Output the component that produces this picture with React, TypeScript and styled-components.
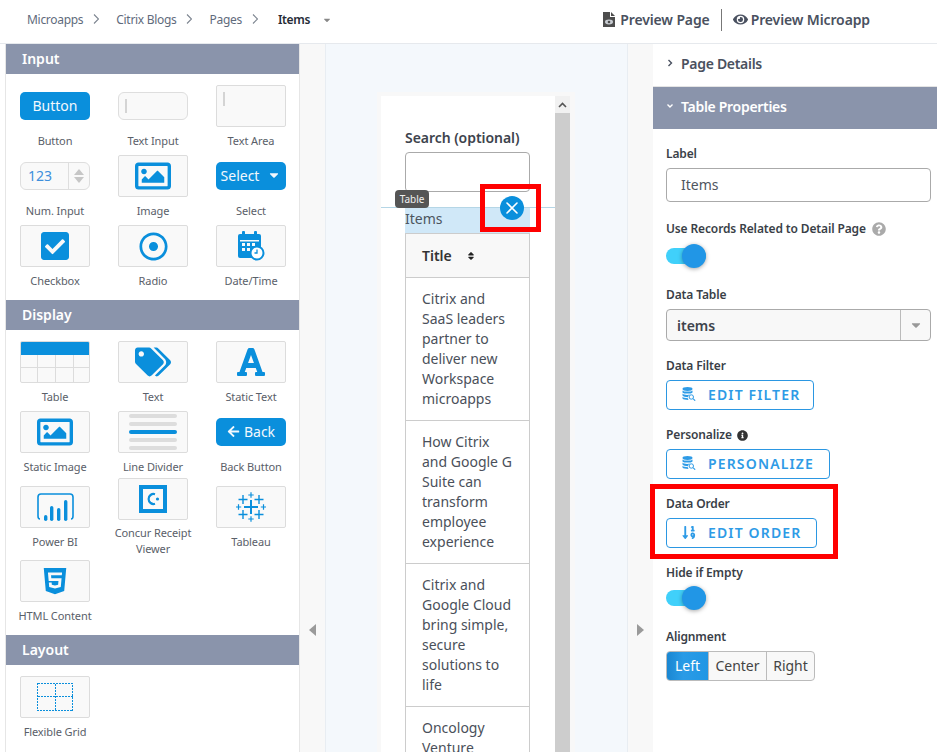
import type { ReactNode } from 'react';
import styled, { createGlobalStyle } from 'styled-components';
import {
  FaArrowLeft,
  FaCaretDown,
  FaCheckSquare,
  FaEye,
  FaFont,
  FaHtml5,
  FaInfoCircle,
  FaQuestionCircle,
  FaRegDotCircle,
  FaRegImage,
  FaSort,
  FaSortNumericDown,
  FaTags,
} from 'react-icons/fa';

const BLUE = '#0a8fdc';
const SLATE = '#8a94ab';

const GlobalStyle = createGlobalStyle`
  html, body {
    margin: 0;
    padding: 0;
    background: #fff;
  }
  * {
    box-sizing: border-box;
  }
  body {
    font-family: "Noto Sans", "Open Sans", sans-serif;
    color: #444b57;
    overflow: hidden;
  }
`;

const Page = styled.div`
  display: flex;
  flex-direction: column;
  height: 752px;
  overflow: hidden;
`;

const TopBar = styled.header`
  display: flex;
  align-items: center;
  justify-content: space-between;
  flex: none;
  height: 44px;
  padding: 0 67px 4px 27px;
  border-bottom: 1px solid #e6e9ed;
`;

const Breadcrumbs = styled.nav`
  display: flex;
  align-items: center;
  font-size: 12px;
  letter-spacing: -0.3px;
  color: #5f6b7c;
`;

const CrumbChevron = styled.svg`
  width: 6px;
  height: 10px;
  margin: -2px 17px 0 10px;
  fill: none;
  stroke: #7d8590;
  stroke-width: 1.1;
`;

const CurrentCrumb = styled.span`
  margin-left: 3px;
  font-weight: 600;
  color: #252b36;
`;

const CrumbCaret = styled(FaCaretDown)`
  margin-left: 12px;
  width: 10px;
  height: 10px;
  color: #888;
`;

const PreviewActions = styled.div`
  display: flex;
  align-items: center;
  font-size: 14px;
  font-weight: 600;
  letter-spacing: -0.12px;
  color: #4a5160;
`;

const PreviewAction = styled.span`
  display: flex;
  align-items: center;
  gap: 3px;
`;

const PreviewDivider = styled.span`
  width: 1px;
  height: 22px;
  margin: 0 11px;
  background: #777;
`;

const Workspace = styled.main`
  display: flex;
  flex: 1;
  min-height: 0;
  padding-left: 5px;
`;

const Palette = styled.aside`
  flex: none;
  width: 295px;
  border-left: 1px solid #e6e6e6;
  border-right: 1px solid #e6e6e6;
  background: #fff;
`;

const PaletteHeading = styled.h3`
  height: 30px;
  margin: 0;
  padding-left: 16px;
  background: ${SLATE};
  color: #fff;
  font-size: 14px;
  font-weight: 600;
  line-height: 30px;
`;

const PaletteGrid = styled.div<{ $rows?: string }>`
  display: grid;
  grid-template-columns: repeat(3, 98px);
  grid-auto-rows: 70px;
  ${({ $rows }) => ($rows ? `grid-template-rows: ${$rows};` : '')}
  padding: 11px 0 5px;
`;

const PaletteItem = styled.div`
  display: flex;
  flex-direction: column;
  align-items: center;
  align-self: center;
`;

const WidgetSlot = styled.div`
  display: flex;
  align-items: center;
  justify-content: center;
  width: 70px;
  height: 42px;
`;

const WidgetLabel = styled.div<{ $tall?: boolean }>`
  display: flex;
  align-items: center;
  justify-content: center;
  width: 94px;
  height: ${({ $tall }) => ($tall ? 42 : 28)}px;
  margin-bottom: ${({ $tall }) => ($tall ? 1 : 0)}px;
  font-size: 11px;
  letter-spacing: -0.1px;
  line-height: 16px;
  text-align: center;
  color: #5a6069;
`;

const Tile = styled.div`
  display: flex;
  align-items: center;
  justify-content: center;
  width: 70px;
  height: 42px;
  border: 1px solid #dcdcdc;
  border-radius: 2px;
  background: #f9f9f9;
  color: ${BLUE};
  overflow: hidden;
`;

const SolidButton = styled.div<{ $gap?: number }>`
  display: flex;
  align-items: center;
  justify-content: center;
  gap: ${({ $gap }) => $gap ?? 0}px;
  width: 70px;
  height: 28px;
  padding-bottom: 2px;
  border-radius: 5px;
  background: ${BLUE};
  color: #f2f8fd;
  font-size: 14px;
`;

const MockField = styled.div`
  display: flex;
  align-items: center;
  width: 70px;
  height: 28px;
  padding-left: 6px;
  border: 1px solid #dedede;
  border-radius: 6px;
  background: #f9f9f9;
`;

const MockCursor = styled.span`
  width: 2px;
  height: 14px;
  background: #d4d4d4;
`;

const AreaTile = styled(Tile)`
  align-items: flex-start;
  justify-content: flex-start;
  padding: 6px 0 0 6px;
`;

const NumberField = styled(MockField)`
  justify-content: space-between;
  padding: 0;
  color: #3e8fdc;
  font-size: 14px;
`;

const NumberValue = styled.span`
  padding: 0 0 2px 7px;
`;

const NumberSpinner = styled.span`
  display: flex;
  flex-direction: column;
  align-items: center;
  justify-content: center;
  gap: 2px;
  width: 21px;
  height: 100%;
  border-left: 1px solid #dedede;
`;

const SpinArrow = styled.span<{ $up?: boolean }>`
  width: 0;
  height: 0;
  border-left: 5px solid transparent;
  border-right: 5px solid transparent;
  ${({ $up }) => ($up ? 'border-bottom' : 'border-top')}: 6px solid #c6c6c6;
`;

const DividerStack = styled.div`
  display: flex;
  flex-direction: column;
  gap: 4px;
  width: 48px;
`;

const DividerBar = styled.span<{ $active?: boolean }>`
  height: 4px;
  border-radius: 2px;
  background: ${({ $active }) => ($active ? BLUE : '#dddddd')};
`;

const Gutter = styled.div`
  display: flex;
  align-items: flex-start;
  justify-content: center;
  flex: none;
  width: 25px;
  padding-top: 580px;
  background: #f8f8f8;
`;

const GutterArrow = styled.span<{ $right?: boolean }>`
  width: 0;
  height: 0;
  border-top: 6px solid transparent;
  border-bottom: 6px solid transparent;
  ${({ $right }) => ($right ? 'border-left' : 'border-right')}: 7px solid #9a9a9a;
`;

const Canvas = styled.section`
  display: flex;
  justify-content: center;
  flex: none;
  width: 303px;
  padding: 48px 1px 0 0;
  border-left: 1px solid #e8edf2;
  border-right: 1px solid #e8edf2;
  background: #f4f8fc;
`;

const PhoneFrame = styled.div`
  display: flex;
  width: 198px;
  height: 660px;
  padding: 4px 5px 0 4px;
  background: #f8f8f8;
`;

const PhoneBody = styled.div`
  flex: 1;
  min-width: 0;
  background: #fff;
`;

const FakeScrollbar = styled.div`
  display: flex;
  flex-direction: column;
  flex: none;
  width: 15px;
  background: #cdcdcd;
`;

const ScrollUp = styled.div`
  display: flex;
  align-items: center;
  justify-content: center;
  height: 17px;
  background: #f1f1f1;
`;

const SearchBlock = styled.div`
  padding: 32px 25px 0 24px;
`;

const SearchLabel = styled.div`
  margin-bottom: 4px;
  font-size: 14px;
  font-weight: 600;
  letter-spacing: -0.05px;
  line-height: 20px;
  color: #3d434d;
`;

const SearchInput = styled.div`
  height: 40px;
  border: 1px solid #aaa;
  border-radius: 4px;
  background: #fff;
`;

const SelectedWidget = styled.div`
  position: relative;
  margin-top: 15px;
  padding: 0 25px 0 24px;
  border-top: 1px solid #b5d6e6;
`;

const WidgetTag = styled.span`
  position: absolute;
  top: -18px;
  left: 14px;
  width: 34px;
  height: 18px;
  border-radius: 4px;
  background: #555;
  color: #f0f0f0;
  font-size: 10px;
  line-height: 18px;
  text-align: center;
`;

const RemoveBadge = styled.span`
  position: absolute;
  top: -12px;
  left: 119px;
  display: flex;
  align-items: center;
  justify-content: center;
  width: 24px;
  height: 24px;
  border-radius: 50%;
  background: ${BLUE};
`;

const Callout = styled.span`
  position: absolute;
  border: 5px solid #f00;
  pointer-events: none;
`;

const RemoveCallout = styled(Callout)`
  top: -24px;
  left: 99px;
  width: 61px;
  height: 48px;
`;

const OrderCallout = styled(Callout)`
  top: -12px;
  left: -16px;
  width: 188px;
  height: 75px;
`;

const WidgetTitle = styled.div`
  height: 25px;
  background: #d0e8f8;
  color: #4c5560;
  font-size: 14px;
  line-height: 21px;
`;

const ResultTable = styled.div`
  border: 1px solid #ccc;
  border-bottom: 0;
`;

const TableHead = styled.div`
  display: flex;
  align-items: center;
  gap: 14px;
  height: 44px;
  padding-left: 16px;
  border-bottom: 1px solid #ccc;
  background: #f8f8f8;
  color: #333;
  font-size: 14px;
  font-weight: 600;
`;

const SortGlyph = styled(FaSort)`
  width: 10px;
  height: 10px;
  color: #222;
`;

const TableRow = styled.div`
  padding: 11px 16px 11px 16px;
  border-bottom: 1px solid #ccc;
  color: #4a505a;
  font-size: 14px;
  line-height: 20px;
`;

const Inspector = styled.aside`
  flex: 1;
  min-width: 0;
  background: #fff;
`;

const AccordionRow = styled.div<{ $open?: boolean }>`
  display: flex;
  align-items: center;
  gap: 8px;
  height: ${({ $open }) => ($open ? 42 : 43)}px;
  padding: 0 0 4px 14px;
  border-bottom: ${({ $open }) => ($open ? '0' : '1px solid #e4e4e4')};
  background: ${({ $open }) => ($open ? SLATE : '#fff')};
  color: ${({ $open }) => ($open ? '#fff' : '#4a5160')};
  font-size: 14px;
  font-weight: 600;
  letter-spacing: -0.3px;
`;

const AccordionIcon = styled.svg`
  width: 6px;
  height: 8px;
  fill: none;
  stroke: currentColor;
  stroke-width: 1.4;
`;

const InspectorForm = styled.div`
  padding: 17px 6px 0 13px;
`;

const Field = styled.div<{ $after: number }>`
  position: relative;
  margin-bottom: ${({ $after }) => $after}px;
`;

const FieldLabel = styled.div<{ $gap?: number }>`
  display: flex;
  align-items: center;
  gap: 5px;
  margin-bottom: ${({ $gap }) => $gap ?? 6}px;
  color: #3a3f48;
  font-size: 12px;
  font-weight: 600;
  letter-spacing: -0.13px;
  line-height: 16px;
`;

const HelpIcon = styled(FaQuestionCircle)`
  width: 14px;
  height: 14px;
  margin-left: 1px;
  color: #aaa;
`;

const InfoIcon = styled(FaInfoCircle)`
  width: 11px;
  height: 11px;
  color: #333;
`;

const TextBox = styled.div`
  display: flex;
  align-items: center;
  height: 34px;
  padding: 0 0 2px 14px;
  border: 1px solid #aaa;
  border-radius: 4px;
  color: #50565f;
  font-size: 14px;
`;

const ToggleWrap = styled.div`
  display: flex;
  align-items: center;
  height: 24px;
`;

const ToggleTrack = styled.div`
  display: flex;
  align-items: center;
  justify-content: flex-end;
  width: 40px;
  height: 16px;
  border-radius: 8px;
  background: #40d0fa;
`;

const ToggleKnob = styled.span`
  flex: none;
  width: 24px;
  height: 24px;
  border-radius: 50%;
  background: #2196e6;
  box-shadow: 0 1px 4px rgba(0, 0, 0, 0.35);
`;

const SelectBox = styled.div`
  display: flex;
  align-items: center;
  height: 32px;
  padding-left: 10px;
  border: 1px solid #aaa;
  border-radius: 4px;
  background: #f8f8f8;
  color: #3f444d;
  font-size: 14px;
  font-weight: 600;
`;

const SelectValue = styled.span`
  flex: 1;
`;

const SelectToggle = styled.span`
  display: flex;
  align-items: center;
  justify-content: center;
  width: 30px;
  height: 100%;
  border-left: 1px solid #bbb;
  color: #999;
`;

const OutlineButton = styled.div<{ $width: number }>`
  display: flex;
  align-items: center;
  gap: 12px;
  width: ${({ $width }) => $width}px;
  height: 30px;
  padding: 0 0 2px 15px;
  border: 1px solid #2b97e2;
  border-radius: 4px;
  color: #2e9be6;
  font-size: 14px;
  font-weight: 600;
  letter-spacing: 1.15px;
  white-space: nowrap;
`;

const OutlineIcon = styled.span`
  display: flex;
  align-items: center;
  justify-content: center;
  width: 14px;
`;

const Segments = styled.div`
  display: inline-flex;
  height: 30px;
  border: 1px solid #bbb;
  border-radius: 4px;
  background: #f8f8f8;
  overflow: hidden;
`;

const Segment = styled.span<{ $active?: boolean; $width: number }>`
  width: ${({ $width }) => $width}px;
  border-left: ${({ $active }) => ($active ? '0' : '1px solid #bbb')};
  background: ${({ $active }) =>
    $active ? 'linear-gradient(90deg, #1a87d2, #2a9be6 40%, #2096e4)' : 'transparent'};
  color: ${({ $active }) => ($active ? '#fff' : '#444')};
  font-size: 14px;
  line-height: 28px;
  text-align: center;
`;

const CalendarIcon = () => (
  <svg width="28" height="30" viewBox="0 0 28 30">
    <rect x="1" y="3" width="23" height="24" rx="2" fill={BLUE} />
    <rect x="5" y="0" width="3" height="6" rx="1" fill={BLUE} />
    <rect x="17" y="0" width="3" height="6" rx="1" fill={BLUE} />
    <rect x="3" y="9" width="19" height="1.5" fill="#f9f9f9" />
    {[5, 10, 15].map((x) =>
      [12, 17].map((y) => <rect key={`${x}-${y}`} x={x} y={y} width="3" height="3" fill="#f9f9f9" />)
    )}
    <circle cx="20" cy="22" r="6.5" fill="#fff" stroke={BLUE} strokeWidth="2" />
    <path d="M20 18.5V22H17.5" fill="none" stroke={BLUE} strokeWidth="1.3" />
  </svg>
);

const TableIcon = () => (
  <svg width="68" height="40" viewBox="0 0 68 40">
    <rect width="68" height="13" fill={BLUE} />
    <path d="M0 25.5H68M16.5 13V40M34.5 13V40M52.5 13V40" stroke="#dcdcdc" strokeWidth="1" fill="none" />
  </svg>
);

const PowerBiIcon = () => (
  <svg width="37" height="28" viewBox="0 0 37 28">
    <path
      d="M3 26Q1 26 1 23V4Q1 1 4 1H33Q36 1 36 4V23Q36 26 34 26"
      fill="none"
      stroke={BLUE}
      strokeWidth="1.6"
    />
    <rect x="7" y="22" width="3.4" height="6" rx="1.7" fill={BLUE} />
    <rect x="13" y="13" width="3.4" height="15" rx="1.7" fill={BLUE} />
    <rect x="20" y="15" width="3.4" height="13" rx="1.7" fill={BLUE} />
    <rect x="27" y="7" width="3.4" height="21" rx="1.7" fill={BLUE} />
  </svg>
);

const ConcurIcon = () => (
  <svg width="28" height="28" viewBox="0 0 28 28">
    <rect width="28" height="28" fill={BLUE} />
    <rect x="4" y="4" width="20" height="20" fill="#f9f9f9" />
    <path d="M16 9.2A5 5 0 1 0 16 18.8" fill="none" stroke={BLUE} strokeWidth="2.2" />
    <circle cx="18.5" cy="14" r="1.6" fill={BLUE} />
  </svg>
);

const TABLEAU_MARKS = [
  [0, 0, 7, 2],
  [-8, -7.5, 4.5, 1.4],
  [8, -7.5, 4.5, 1.4],
  [-8, 7.5, 4.5, 1.4],
  [8, 7.5, 4.5, 1.4],
  [0, -12, 2.7, 1.2],
  [0, 12, 2.7, 1.2],
  [-12.5, 0, 2.7, 1.2],
  [12.5, 0, 2.7, 1.2],
];

const TableauIcon = () => (
  <svg width="30" height="30" viewBox="-15 -15 30 30">
    {TABLEAU_MARKS.map(([x, y, r, w]) => (
      <path
        key={`${x},${y}`}
        d={`M${x - r} ${y}H${x + r}M${x} ${y - r}V${y + r}`}
        stroke={BLUE}
        strokeWidth={w}
        fill="none"
      />
    ))}
  </svg>
);

const FlexGridIcon = () => (
  <svg width="38" height="30" viewBox="0 0 38 30" shapeRendering="crispEdges">
    <path
      d="M1.5 1.5H36.5V28.5H1.5ZM1.5 14.5H36.5M19.5 1.5V28.5"
      fill="none"
      stroke={BLUE}
      strokeWidth="1"
      strokeDasharray="2 1"
    />
  </svg>
);

const DataSearchIcon = () => (
  <svg width="14" height="14" viewBox="0 0 14 14">
    <ellipse cx="5.5" cy="2" rx="5" ry="1.9" fill="#2e9be6" />
    <path
      d="M.5 3.4C1.5 5 9.5 5 10.5 3.4V5.4C9.5 7 1.5 7 .5 5.4ZM.5 6.6C1.5 8.2 6 8.4 8 7.6 6.6 8.4 6 9.4 6 10.2 3.5 10.2 1.2 9.6.5 8.6ZM.5 9.8C1.2 10.8 3.5 11.2 6 11.2L6.4 13C3.5 13 1.2 12.6.5 11.6Z"
      fill="#2e9be6"
    />
    <circle cx="9.3" cy="10" r="2.2" fill="none" stroke="#2e9be6" strokeWidth="1" />
    <path d="M11 11.7L13.2 13.7" stroke="#2e9be6" strokeWidth="1.1" />
  </svg>
);

const PagePreviewIcon = () => (
  <svg width="14" height="15" viewBox="0 0 14 15">
    <path d="M0 0H7V5H12V15H0Z" fill="#4d4d4d" />
    <path d="M8 0L12 4H8Z" fill="#4d4d4d" />
    <ellipse cx="6" cy="10" rx="4" ry="2.4" fill="#c8ccd2" />
    <circle cx="6" cy="10" r="1.3" fill="#4d4d4d" />
  </svg>
);

const CloseIcon = () => (
  <svg width="12" height="12" viewBox="0 0 12 12">
    <path d="M1 1L11 11M11 1L1 11" stroke="#fff" strokeWidth="1.6" strokeLinecap="round" />
  </svg>
);

const Chevron = () => (
  <CrumbChevron viewBox="0 0 6 10">
    <path d="M1 .5L5.5 5L1 9.5" />
  </CrumbChevron>
);

type Widget = { label: string; preview: ReactNode; tall?: boolean };

const inputWidgets: Widget[] = [
  { label: 'Button', preview: <SolidButton>Button</SolidButton> },
  { label: 'Text Input', preview: <MockField><MockCursor /></MockField> },
  { label: 'Text Area', preview: <AreaTile><MockCursor /></AreaTile> },
  {
    label: 'Num. Input',
    preview: (
      <NumberField>
        <NumberValue>123</NumberValue>
        <NumberSpinner>
          <SpinArrow $up />
          <SpinArrow />
        </NumberSpinner>
      </NumberField>
    ),
  },
  { label: 'Image', preview: <Tile><FaRegImage size={36} /></Tile> },
  { label: 'Select', preview: <SolidButton $gap={8}>Select <FaCaretDown size={14} /></SolidButton> },
  { label: 'Checkbox', preview: <Tile><FaCheckSquare size={32} /></Tile> },
  { label: 'Radio', preview: <Tile><FaRegDotCircle size={29} /></Tile> },
  { label: 'Date/Time', preview: <Tile><CalendarIcon /></Tile> },
];

const displayWidgets: Widget[] = [
  { label: 'Table', preview: <Tile><TableIcon /></Tile> },
  { label: 'Text', preview: <Tile><FaTags size={36} /></Tile> },
  { label: 'Static Text', preview: <Tile><FaFont size={32} /></Tile> },
  { label: 'Static Image', preview: <Tile><FaRegImage size={36} /></Tile> },
  {
    label: 'Line Divider',
    preview: (
      <Tile>
        <DividerStack>
          <DividerBar />
          <DividerBar />
          <DividerBar $active />
          <DividerBar />
          <DividerBar />
        </DividerStack>
      </Tile>
    ),
  },
  { label: 'Back Button', preview: <SolidButton $gap={4}><FaArrowLeft size={13} />Back</SolidButton> },
  { label: 'Power BI', preview: <Tile><PowerBiIcon /></Tile> },
  { label: 'Concur Receipt Viewer', preview: <Tile><ConcurIcon /></Tile>, tall: true },
  { label: 'Tableau', preview: <Tile><TableauIcon /></Tile> },
  { label: 'HTML Content', preview: <Tile><FaHtml5 size={30} /></Tile> },
];

const layoutWidgets: Widget[] = [
  { label: 'Flexible Grid', preview: <Tile><FlexGridIcon /></Tile> },
];

const paletteSections = [
  { title: 'Input', widgets: inputWidgets },
  { title: 'Display', widgets: displayWidgets, rows: '70px 70px 79px 70px' },
  { title: 'Layout', widgets: layoutWidgets },
];

const blogTitles = [
  'Citrix and SaaS leaders partner to deliver new Workspace microapps',
  'How Citrix and Google G Suite can transform employee experience',
  'Citrix and Google Cloud bring simple, secure solutions to life',
  'Oncology Venture',
];

export default function App() {
  return (
    <Page>
      <GlobalStyle />
      <TopBar>
        <Breadcrumbs>
          <span>Microapps</span>
          <Chevron />
          <span>Citrix Blogs</span>
          <Chevron />
          <span>Pages</span>
          <Chevron />
          <CurrentCrumb>Items</CurrentCrumb>
          <CrumbCaret />
        </Breadcrumbs>
        <PreviewActions>
          <PreviewAction>
            <PagePreviewIcon />
            Preview Page
          </PreviewAction>
          <PreviewDivider />
          <PreviewAction>
            <FaEye size={15} />
            Preview Microapp
          </PreviewAction>
        </PreviewActions>
      </TopBar>

      <Workspace>
        <Palette>
          {paletteSections.map((section) => (
            <section key={section.title}>
              <PaletteHeading>{section.title}</PaletteHeading>
              <PaletteGrid $rows={section.rows}>
                {section.widgets.map((widget) => (
                  <PaletteItem key={widget.label}>
                    <WidgetSlot>{widget.preview}</WidgetSlot>
                    <WidgetLabel $tall={widget.tall}>{widget.label}</WidgetLabel>
                  </PaletteItem>
                ))}
              </PaletteGrid>
            </section>
          ))}
        </Palette>

        <Gutter>
          <GutterArrow />
        </Gutter>

        <Canvas>
          <PhoneFrame>
            <PhoneBody>
              <SearchBlock>
                <SearchLabel>Search (optional)</SearchLabel>
                <SearchInput />
              </SearchBlock>
              <SelectedWidget>
                <WidgetTitle>Items</WidgetTitle>
                <ResultTable>
                  <TableHead>
                    Title
                    <SortGlyph />
                  </TableHead>
                  {blogTitles.map((title) => (
                    <TableRow key={title}>{title}</TableRow>
                  ))}
                </ResultTable>
                <WidgetTag>Table</WidgetTag>
                <RemoveBadge>
                  <CloseIcon />
                </RemoveBadge>
                <RemoveCallout />
              </SelectedWidget>
            </PhoneBody>
            <FakeScrollbar>
              <ScrollUp>
                <svg width="9" height="6" viewBox="0 0 9 6">
                  <path d="M1 5L4.5 1.5L8 5" fill="none" stroke="#555" strokeWidth="1.6" />
                </svg>
              </ScrollUp>
            </FakeScrollbar>
          </PhoneFrame>
        </Canvas>

        <Gutter>
          <GutterArrow $right />
        </Gutter>

        <Inspector>
          <AccordionRow>
            <AccordionIcon viewBox="0 0 6 8">
              <path d="M1.5 1L4.5 4L1.5 7" />
            </AccordionIcon>
            Page Details
          </AccordionRow>
          <AccordionRow $open>
            <AccordionIcon viewBox="0 0 6 8">
              <path d="M.5 2.5L3 5L5.5 2.5" />
            </AccordionIcon>
            Table Properties
          </AccordionRow>
          <InspectorForm>
            <Field $after={19}>
              <FieldLabel>Label</FieldLabel>
              <TextBox>Items</TextBox>
            </Field>
            <Field $after={19}>
              <FieldLabel $gap={7}>
                Use Records Related to Detail Page
                <HelpIcon />
              </FieldLabel>
              <ToggleWrap>
                <ToggleTrack>
                  <ToggleKnob />
                </ToggleTrack>
              </ToggleWrap>
            </Field>
            <Field $after={17}>
              <FieldLabel>Data Table</FieldLabel>
              <SelectBox>
                <SelectValue>items</SelectValue>
                <SelectToggle>
                  <FaCaretDown size={14} />
                </SelectToggle>
              </SelectBox>
            </Field>
            <Field $after={17}>
              <FieldLabel>Data Filter</FieldLabel>
              <OutlineButton $width={148}>
                <OutlineIcon>
                  <DataSearchIcon />
                </OutlineIcon>
                EDIT FILTER
              </OutlineButton>
            </Field>
            <Field $after={17}>
              <FieldLabel>
                Personalize
                <InfoIcon />
              </FieldLabel>
              <OutlineButton $width={164}>
                <OutlineIcon>
                  <DataSearchIcon />
                </OutlineIcon>
                PERSONALIZE
              </OutlineButton>
            </Field>
            <Field $after={17}>
              <FieldLabel>Data Order</FieldLabel>
              <OutlineButton $width={151}>
                <OutlineIcon>
                  <FaSortNumericDown size={15} />
                </OutlineIcon>
                EDIT ORDER
              </OutlineButton>
              <OrderCallout />
            </Field>
            <Field $after={19}>
              <FieldLabel $gap={5}>Hide if Empty</FieldLabel>
              <ToggleWrap>
                <ToggleTrack>
                  <ToggleKnob />
                </ToggleTrack>
              </ToggleWrap>
            </Field>
            <Field $after={0}>
              <FieldLabel>Alignment</FieldLabel>
              <Segments>
                <Segment $active $width={41}>Left</Segment>
                <Segment $width={58}>Center</Segment>
                <Segment $width={48}>Right</Segment>
              </Segments>
            </Field>
          </InspectorForm>
        </Inspector>
      </Workspace>
    </Page>
  );
}
